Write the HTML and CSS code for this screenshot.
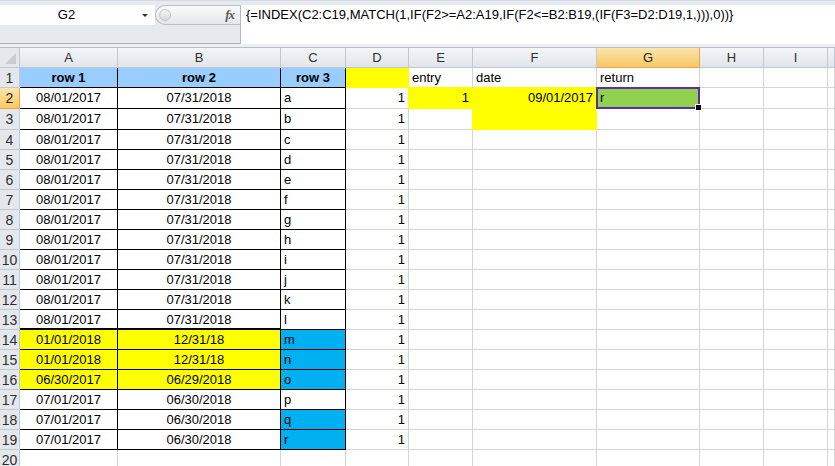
FILE: index.html
```html
<!DOCTYPE html>
<html lang="en">

<head>
    <meta charset="utf-8">
    <title>Book1 - G2</title>
    <link rel="stylesheet" href="styles.css">
</head>

<body>
    <div class="topbar">
        <div class="leftbox">
            <div class="namebox">G2<span class="arrow"></span></div>
            <div class="pill"><span class="knob"></span><span class="fx">fx</span></div>
        </div>
        <div class="formula">{=INDEX(C2:C19,MATCH(1,IF(F2&gt;=A2:A19,IF(F2&lt;=B2:B19,(IF(F3=D2:D19,1,))),0))}</div>
    </div>
    <div class="sep"></div>

    <div class="sheet">
        <!-- column headers -->
        <div class="corner"></div><div class="ch">A</div><div class="ch">B</div><div class="ch">C</div><div class="ch">D</div><div class="ch">E</div><div class="ch">F</div><div class="ch active">G</div><div class="ch">H</div><div class="ch">I</div><div class="ch"></div>

        <div class="rh">1</div><div class="cell b hd ctr">row 1</div><div class="cell b hd ctr">row 2</div><div class="cell b hd ctr">row 3</div><div class="cell fill-y"></div><div class="cell txt by">entry</div><div class="cell txt by">date</div><div class="cell txt">return</div><div class="cell"></div><div class="cell"></div><div class="cell"></div>

        <div class="rh active">2</div><div class="cell b ctr">08/01/2017</div><div class="cell b ctr">07/31/2018</div><div class="cell b txt">a</div><div class="cell num ry">1</div><div class="cell num fill-y">1</div><div class="cell num fill-y">09/01/2017</div><div class="cell txt fill-g sel">r</div><div class="cell"></div><div class="cell"></div><div class="cell"></div>

        <div class="rh">3</div><div class="cell b ctr">08/01/2017</div><div class="cell b ctr">07/31/2018</div><div class="cell b txt">b</div><div class="cell num">1</div><div class="cell ry"></div><div class="cell fill-y"></div><div class="cell"></div><div class="cell"></div><div class="cell"></div><div class="cell"></div>

        <div class="rh">4</div><div class="cell b ctr">08/01/2017</div><div class="cell b ctr">07/31/2018</div><div class="cell b txt">c</div><div class="cell num">1</div><div class="cell"></div><div class="cell"></div><div class="cell"></div><div class="cell"></div><div class="cell"></div><div class="cell"></div>

        <div class="rh">5</div><div class="cell b ctr">08/01/2017</div><div class="cell b ctr">07/31/2018</div><div class="cell b txt">d</div><div class="cell num">1</div><div class="cell"></div><div class="cell"></div><div class="cell"></div><div class="cell"></div><div class="cell"></div><div class="cell"></div>

        <div class="rh">6</div><div class="cell b ctr">08/01/2017</div><div class="cell b ctr">07/31/2018</div><div class="cell b txt">e</div><div class="cell num">1</div><div class="cell"></div><div class="cell"></div><div class="cell"></div><div class="cell"></div><div class="cell"></div><div class="cell"></div>

        <div class="rh">7</div><div class="cell b ctr">08/01/2017</div><div class="cell b ctr">07/31/2018</div><div class="cell b txt">f</div><div class="cell num">1</div><div class="cell"></div><div class="cell"></div><div class="cell"></div><div class="cell"></div><div class="cell"></div><div class="cell"></div>

        <div class="rh">8</div><div class="cell b ctr">08/01/2017</div><div class="cell b ctr">07/31/2018</div><div class="cell b txt">g</div><div class="cell num">1</div><div class="cell"></div><div class="cell"></div><div class="cell"></div><div class="cell"></div><div class="cell"></div><div class="cell"></div>

        <div class="rh">9</div><div class="cell b ctr">08/01/2017</div><div class="cell b ctr">07/31/2018</div><div class="cell b txt">h</div><div class="cell num">1</div><div class="cell"></div><div class="cell"></div><div class="cell"></div><div class="cell"></div><div class="cell"></div><div class="cell"></div>

        <div class="rh">10</div><div class="cell b ctr">08/01/2017</div><div class="cell b ctr">07/31/2018</div><div class="cell b txt">i</div><div class="cell num">1</div><div class="cell"></div><div class="cell"></div><div class="cell"></div><div class="cell"></div><div class="cell"></div><div class="cell"></div>

        <div class="rh">11</div><div class="cell b ctr">08/01/2017</div><div class="cell b ctr">07/31/2018</div><div class="cell b txt">j</div><div class="cell num">1</div><div class="cell"></div><div class="cell"></div><div class="cell"></div><div class="cell"></div><div class="cell"></div><div class="cell"></div>

        <div class="rh">12</div><div class="cell b ctr">08/01/2017</div><div class="cell b ctr">07/31/2018</div><div class="cell b txt">k</div><div class="cell num">1</div><div class="cell"></div><div class="cell"></div><div class="cell"></div><div class="cell"></div><div class="cell"></div><div class="cell"></div>

        <div class="rh">13</div><div class="cell b ctr thick">08/01/2017</div><div class="cell b ctr thick">07/31/2018</div><div class="cell b txt">l</div><div class="cell num">1</div><div class="cell"></div><div class="cell"></div><div class="cell"></div><div class="cell"></div><div class="cell"></div><div class="cell"></div>

        <div class="rh">14</div><div class="cell b ctr yel">01/01/2018</div><div class="cell b ctr yel">12/31/18</div><div class="cell b txt cyan">m</div><div class="cell num">1</div><div class="cell"></div><div class="cell"></div><div class="cell"></div><div class="cell"></div><div class="cell"></div><div class="cell"></div>

        <div class="rh">15</div><div class="cell b ctr yel">01/01/2018</div><div class="cell b ctr yel">12/31/18</div><div class="cell b txt cyan">n</div><div class="cell num">1</div><div class="cell"></div><div class="cell"></div><div class="cell"></div><div class="cell"></div><div class="cell"></div><div class="cell"></div>

        <div class="rh">16</div><div class="cell b ctr yel">06/30/2017</div><div class="cell b ctr yel">06/29/2018</div><div class="cell b txt cyan">o</div><div class="cell num">1</div><div class="cell"></div><div class="cell"></div><div class="cell"></div><div class="cell"></div><div class="cell"></div><div class="cell"></div>

        <div class="rh">17</div><div class="cell b ctr">07/01/2017</div><div class="cell b ctr">06/30/2018</div><div class="cell b txt">p</div><div class="cell num">1</div><div class="cell"></div><div class="cell"></div><div class="cell"></div><div class="cell"></div><div class="cell"></div><div class="cell"></div>

        <div class="rh">18</div><div class="cell b ctr">07/01/2017</div><div class="cell b ctr">06/30/2018</div><div class="cell b txt cyan">q</div><div class="cell num">1</div><div class="cell"></div><div class="cell"></div><div class="cell"></div><div class="cell"></div><div class="cell"></div><div class="cell"></div>

        <div class="rh">19</div><div class="cell b ctr">07/01/2017</div><div class="cell b ctr">06/30/2018</div><div class="cell b txt cyan">r</div><div class="cell num">1</div><div class="cell"></div><div class="cell"></div><div class="cell"></div><div class="cell"></div><div class="cell"></div><div class="cell"></div>

        <div class="rh">20</div><div class="cell"></div><div class="cell"></div><div class="cell"></div><div class="cell"></div><div class="cell"></div><div class="cell"></div><div class="cell"></div><div class="cell"></div><div class="cell"></div><div class="cell"></div>
    </div>
</body>

</html>
```

FILE: styles.css
```css
html,
body {
    margin: 0;
    height: 100%;
    overflow: hidden;
    background: #fff;
    font-family: 'Liberation Sans', Arial, sans-serif;
    font-size: 13px;
    color: #000;
}

/* formula bar */
.topbar {
    display: flex;
    height: 44px;
    box-sizing: border-box;
    padding-top: 4px;
    background: #e6e9ed;
    border-top: 1px solid #d6dadf;
    border-bottom: 1px solid #a9b0b8;
}

.leftbox {
    display: flex;
    align-items: flex-start;
    width: 240px;
}

.namebox {
    position: relative;
    width: 155px;
    height: 20px;
    line-height: 20px;
    box-sizing: border-box;
    padding-right: 22px;
    text-align: center;
    background: #fff;
}

.arrow {
    position: absolute;
    right: 7px;
    top: 9px;
    border-left: 3px solid transparent;
    border-right: 3px solid transparent;
    border-top: 3px solid #333;
}

.pill {
    display: flex;
    align-items: center;
    justify-content: space-between;
    flex: 1;
    height: 20px;
    box-sizing: border-box;
    padding: 0 6px 0 3px;
    border: 1px solid #b9bec4;
    border-right: none;
    border-radius: 10px 0 0 10px;
    background: linear-gradient(#fafbfc, #e3e6ea);
}

.knob {
    width: 10px;
    height: 10px;
    border-radius: 50%;
    border: 1px solid #c3c7cc;
    background: linear-gradient(#f4f5f6, #d6d9dd);
}

.fx {
    font-family: 'Liberation Serif', 'Times New Roman', serif;
    font-style: italic;
    font-weight: bold;
    font-size: 13px;
    color: #5a5a5a;
    letter-spacing: -1px;
}

.formula {
    flex: 1;
    height: 39px;
    box-sizing: border-box;
    padding: 2px 0 0 5px;
    background: #fff;
    border-left: 1px solid #b3b9c0;
    white-space: nowrap;
}

.sep {
    height: 3px;
    background: #eceef1;
    border-bottom: 1px solid #b8bec5;
}

/* grid */
.sheet {
    display: grid;
    grid-template-columns: 20px 98px 163px 65px 63px 64px 124px 103px 64px 64px 1fr;
    grid-template-rows: 20px 20px 21px 21px;
    grid-auto-rows: 20px;
}

.corner,
.ch,
.rh {
    box-sizing: border-box;
    color: #2f2f2f;
    text-align: center;
    line-height: 20px;
    border-right: 1px solid #c3c8ce;
    border-bottom: 1px solid #c3c8ce;
}

.corner {
    position: relative;
    background: #e4e7eb;
}

.corner::after {
    content: '';
    position: absolute;
    right: 3px;
    bottom: 3px;
    border-left: 11px solid transparent;
    border-bottom: 11px solid #c9ccd0;
}

.ch {
    background: linear-gradient(#f4f6f8, #e1e5ea);
}

.rh {
    background: #e4e8ed;
    font-size: 14px;
}

.ch.active,
.rh.active {
    background: linear-gradient(#fbe6ac, #f6c864);
    border-color: #eea348;
    color: #222;
}

.cell {
    box-sizing: border-box;
    line-height: 20px;
    white-space: nowrap;
    overflow: hidden;
    border-right: 1px solid #d4d4d4;
    border-bottom: 1px solid #d4d4d4;
}

.b {
    border-color: #000;
}

.thick {
    border-bottom-width: 2px;
}

.hd {
    background: #99ccff;
    font-weight: bold;
}

.ctr {
    text-align: center;
}

.txt {
    padding-left: 3px;
}

.num {
    text-align: right;
    padding-right: 3px;
}

.yel {
    background: #ffff00;
}

.cyan {
    background: #00b0f0;
}

.fill-y {
    background: #ffff00;
    border-color: #ffff00;
}

.fill-g {
    background: #92d050;
    border-color: #92d050;
}

.ry {
    border-right-color: #ffff00;
}

.by {
    border-bottom-color: #ffff00;
}

/* active cell outline + fill handle */
.sel {
    position: relative;
    overflow: visible;
}

.sel::after {
    content: '';
    position: absolute;
    top: -1px;
    left: -1px;
    right: -1px;
    bottom: -1px;
    border: 2px solid #5b2fa3;
}

.sel::before {
    content: '';
    position: absolute;
    right: -3px;
    bottom: -3px;
    width: 5px;
    height: 5px;
    background: #000;
    border: 1px solid #fff;
    z-index: 1;
}
```
